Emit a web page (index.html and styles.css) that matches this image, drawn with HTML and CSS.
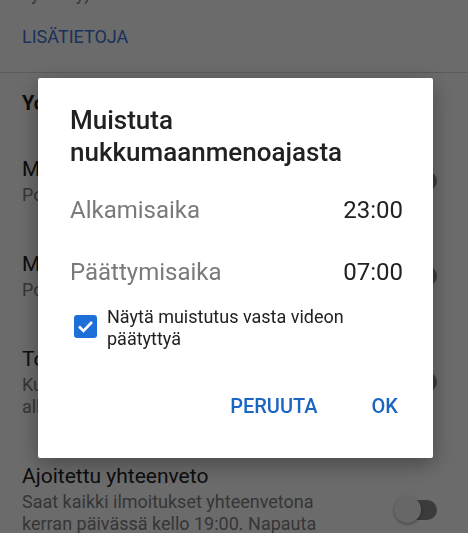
FILE: index.html
```html
<!DOCTYPE html>
<html lang="fi">
<head>
    <meta charset="UTF-8">
    <title>Ilmoitukset</title>
    <link rel="stylesheet" href="styles.css">
</head>
<body>
<div class="page">
    <div class="intro">
        <p class="intro-text">kytketty)</p>
        <a class="more-link">LISÄTIETOJA</a>
    </div>

    <h2 class="section-title">YouTube-ilmoitukset</h2>

    <div class="item">
        <div class="item-text">
            <p class="item-title">Muistuta tauosta</p>
            <p class="item-sub">Pois päältä</p>
        </div>
        <span class="switch"></span>
    </div>
    <div class="item">
        <div class="item-text">
            <p class="item-title">Muistuta nukkumaanmenoajasta</p>
            <p class="item-sub">Pois päältä</p>
        </div>
        <span class="switch"></span>
    </div>
    <div class="item">
        <div class="item-text">
            <p class="item-title">Toista automaattisesti</p>
            <p class="item-sub">Kun toisto on päällä, seuraava video<br>alkaa automaattisesti.</p>
        </div>
        <span class="switch"></span>
    </div>
    <div class="item">
        <div class="item-text">
            <p class="item-title">Ajoitettu yhteenveto</p>
            <p class="item-sub">Saat kaikki ilmoitukset yhteenvetona<br>kerran päivässä kello 19:00. Napauta<br>muuttaaksesi aikaa.</p>
        </div>
        <span class="switch"></span>
    </div>
</div>

<!-- tumma tausta ja dialogi sen päällä -->
<div class="scrim">
    <div class="dialog">
        <h1 class="dialog-title">Muistuta nukkumaanmenoajasta</h1>

        <div class="time-row">
            <span class="time-label">Alkamisaika</span>
            <span class="time-value">23:00</span>
        </div>
        <div class="time-row">
            <span class="time-label">Päättymisaika</span>
            <span class="time-value">07:00</span>
        </div>

        <label class="check-row">
            <svg class="check-box" width="23" height="23" viewBox="0 0 23 23">
                <rect width="23" height="23" rx="3" fill="#1f6fd8"/>
                <polyline points="5,11.5 9.5,16 18,7" fill="none" stroke="#fff" stroke-width="2.6"/>
            </svg>
            <span class="check-text">Näytä muistutus vasta videon päätyttyä</span>
        </label>

        <div class="actions">
            <a class="btn">PERUUTA</a>
            <a class="btn">OK</a>
        </div>
    </div>
</div>
</body>
</html>
```

FILE: styles.css
```css
* {
    margin: 0;
    padding: 0;
}

html, body {
    height: 100%;
    overflow: hidden;
}

body {
    font-family: Roboto, "Noto Sans", sans-serif;
    background-color: #fff;
    color: #212121;
}

/* asetussivu taustalla */
.intro {
    padding: 0 22px 23px;
    border-bottom: 1px solid #d6d6d6;
}

.intro-text {
    margin-top: -17px;
    font-size: 18px;
    line-height: 22px;
    color: #808080;
}

.more-link {
    display: block;
    margin-top: 20px;
    font-size: 18px;
    line-height: 24px;
    color: #3c78d8;
}

.section-title {
    padding: 18px 22px 0;
    font-size: 20px;
    line-height: 24px;
    font-weight: 700;
    height: 43px;
}

.item {
    display: flex;
    align-items: center;
    padding: 22px 31px 23px 22px;
}

.item-text {
    flex: 1;
}

.item-title {
    font-size: 21px;
    line-height: 26px;
}

.item-sub {
    margin-top: 2px;
    font-size: 18px;
    line-height: 22px;
    color: #808080;
}

.switch {
    position: relative;
    width: 37px;
    height: 20px;
    border-radius: 10px;
    background-color: #8c8c8c;
}

.switch::before {
    content: "";
    position: absolute;
    left: -6px;
    top: -4px;
    width: 27px;
    height: 27px;
    border-radius: 50%;
    background-color: #f5f5f5;
    box-shadow: 0 1px 3px rgba(0, 0, 0, 0.4);
}

/* dialogi */
.scrim {
    position: fixed;
    left: 0;
    top: 0;
    right: 0;
    bottom: 0;
    background-color: rgba(0, 0, 0, 0.58);
    padding: 78px 0 0 38px;
}

.dialog {
    width: 395px;
    height: 380px;
    box-sizing: border-box;
    padding: 26px 30px 0 32px;
    background-color: #fff;
    border-radius: 2px;
    box-shadow: 0 6px 22px rgba(0, 0, 0, 0.35);
}

.dialog-title {
    font-size: 26px;
    line-height: 32px;
    font-weight: 500;
    color: #212121;
}

.time-row {
    display: flex;
    justify-content: space-between;
    font-size: 24px;
    line-height: 62px;
}

.time-row:first-of-type {
    margin-top: 11px;
}

.time-label {
    color: #7a7a7a;
}

.time-value {
    color: #212121;
}

.check-row {
    display: flex;
    align-items: flex-start;
    margin-top: 3px;
}

.check-box {
    flex: none;
    margin: 9px 10px 0 4px;
}

.check-text {
    width: 250px;
    font-size: 18px;
    line-height: 22px;
    color: #212121;
}

.actions {
    display: flex;
    justify-content: flex-end;
    gap: 54px;
    margin-top: 44px;
    padding-right: 5px;
}

.btn {
    font-size: 20px;
    line-height: 24px;
    font-weight: 500;
    color: #1a66c2;
}
```
